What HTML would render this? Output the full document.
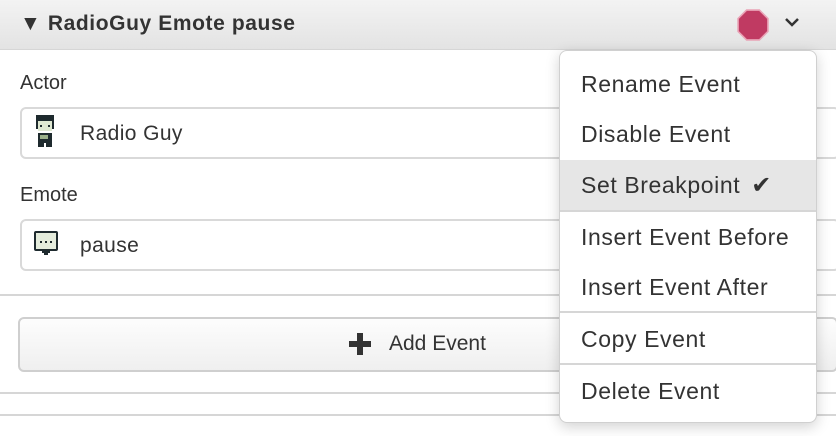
<!DOCTYPE html><html><head><style>
body{margin:0;width:836px;height:436px;overflow:hidden;background:#fff;font-family:"Liberation Sans",sans-serif;position:relative;color:#333}
.a{position:absolute}
.hdr{left:0;top:0;width:836px;height:49px;background:linear-gradient(#f3f3f3,#e3e3e3);border-bottom:1px solid #d6d6d6}
.line{left:0;width:836px;height:2px;background:#d6d6d6}
.inp{left:20px;width:820px;height:52px;border:2px solid #d9d9d9;border-radius:6px;box-sizing:border-box}
.lbl{font-size:20px;color:#333}
.menu{left:559px;top:50px;width:258px;height:373px;background:#fff;border:1px solid #d0d0d0;border-radius:8px;box-shadow:0 4px 14px rgba(0,0,0,.18);box-sizing:border-box}
.it{position:absolute;left:0;width:256px;font-size:23px;padding-left:21px;box-sizing:border-box;color:#333;letter-spacing:.6px;white-space:nowrap}
.sep{position:absolute;left:0;width:256px;height:2px;background:#d6d6d6}
</style></head><body>
<div class="a hdr"></div>
<div class="a" style="left:20px;top:12px;font-size:21px;font-weight:bold;color:#333;letter-spacing:.6px">▼ RadioGuy Emote pause</div>
<svg class="a" style="left:737px;top:9px" width="32" height="32" viewBox="0 0 30 30"><polygon points="9,1 21,1 29,9 29,21 21,29 9,29 1,21 1,9" fill="#c03a62" stroke="#e9a3b6" stroke-width="1.5"/></svg>
<svg class="a" style="left:784px;top:17px" width="16" height="12" viewBox="0 0 16 12"><path d="M2 2 L8 8 L14 2" fill="none" stroke="#333" stroke-width="2.5"/></svg>
<div class="a lbl" style="left:20px;top:72px">Actor</div>
<div class="a inp" style="top:107px"></div>
<svg class="a" style="left:32px;top:115px" width="26" height="32" viewBox="0 0 13 16"><rect x="2" y="0" width="9" height="7" fill="#1e2a2e"/><rect x="3" y="3" width="7" height="5" fill="#dfe8d2"/><rect x="4" y="5" width="1" height="1" fill="#1e2a2e"/><rect x="8" y="5" width="1" height="1" fill="#1e2a2e"/><rect x="3" y="9" width="7" height="5" fill="#1e2a2e"/><rect x="4" y="10" width="4" height="2" fill="#9bb08a"/><rect x="3" y="14" width="3" height="2" fill="#1e2a2e"/><rect x="7" y="14" width="3" height="2" fill="#1e2a2e"/></svg>
<div class="a" style="left:80px;top:122px;font-size:21px;letter-spacing:.4px">Radio Guy</div>
<div class="a lbl" style="left:20px;top:184px">Emote</div>
<div class="a inp" style="top:219px"></div>
<svg class="a" style="left:34px;top:231px" width="24" height="26" viewBox="0 0 12 13"><rect x="0" y="0" width="12" height="10" rx="1" fill="#1e2a2e"/><rect x="1" y="1" width="10" height="8" fill="#e4ecdc"/><rect x="3" y="5" width="1" height="1" fill="#1e2a2e"/><rect x="5.5" y="5" width="1" height="1" fill="#1e2a2e"/><rect x="8" y="5" width="1" height="1" fill="#1e2a2e"/><rect x="4" y="10" width="4" height="1" fill="#1e2a2e"/><rect x="5" y="11" width="2" height="1" fill="#1e2a2e"/></svg>
<div class="a" style="left:80px;top:234px;font-size:21px;letter-spacing:.4px">pause</div>
<div class="a line" style="top:294px"></div>
<div class="a" style="left:18px;top:317px;width:820px;height:55px;border:2px solid #cfcfcf;border-radius:6px;box-sizing:border-box;background:linear-gradient(#fdfdfd,#efefef)"></div>
<svg class="a" style="left:349px;top:333px" width="22" height="22" viewBox="0 0 22 22"><rect x="8" y="0" width="6" height="22" fill="#333"/><rect x="0" y="8" width="22" height="6" fill="#333"/></svg>
<div class="a" style="left:389px;top:332px;font-size:21px">Add Event</div>
<div class="a line" style="top:392px"></div>
<div class="a line" style="top:414px"></div>
<div class="a menu">
<div class="it" style="top:20px">Rename Event</div>
<div class="it" style="top:70px">Disable Event</div>
<div style="position:absolute;left:0;top:109px;width:256px;height:50px;background:#e6e6e6"></div>
<div class="it" style="top:120px">Set Breakpoint <span style="margin-left:4px;font-size:24px">✔</span></div>
<div class="sep" style="top:159px"></div>
<div class="it" style="top:173px">Insert Event Before</div>
<div class="it" style="top:223px">Insert Event After</div>
<div class="sep" style="top:260px"></div>
<div class="it" style="top:275px">Copy Event</div>
<div class="sep" style="top:312px"></div>
<div class="it" style="top:327px">Delete Event</div>
</div>
</body></html>
